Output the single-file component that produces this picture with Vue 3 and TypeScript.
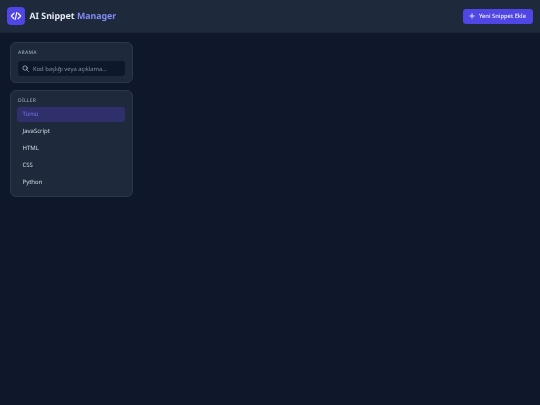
<script setup lang="ts">
const languages: string[] = ['Tümü', 'JavaScript', 'HTML', 'CSS', 'Python']
</script>

<template>
  <div class="page">
    <header class="header">
      <div class="brand">
        <span class="logo">
          <svg width="12" height="12" viewBox="0 0 24 24" fill="none" stroke="#fff" stroke-width="2.2" stroke-linecap="round" stroke-linejoin="round">
            <path d="M8 6.5L2.5 12 8 17.5" />
            <path d="M16 6.5l5.5 5.5-5.5 5.5" />
            <path d="M13.5 5l-3 14" />
          </svg>
        </span>
        <span class="title">AI Snippet <span class="accent">Manager</span></span>
      </div>
      <button class="add">
        <svg width="6" height="6" viewBox="0 0 24 24" fill="none" stroke="#fff" stroke-width="3.2" stroke-linecap="round">
          <path d="M12 3v18M3 12h18" />
        </svg>
        Yeni Snippet Ekle
      </button>
    </header>
    <aside class="sidebar">
      <section class="card">
        <div class="label">ARAMA</div>
        <div class="search">
          <svg width="7" height="7" viewBox="0 0 24 24" fill="none" stroke="#cbd5e1" stroke-width="2.2" stroke-linecap="round">
            <circle cx="10.5" cy="10.5" r="7.5" />
            <path d="M16 16l6 6" />
          </svg>
          <span>Kod başlığı veya açıklama...</span>
        </div>
      </section>
      <section class="card">
        <div class="label langs-label">DİLLER</div>
        <ul class="langs">
          <li v-for="(lang, i) in languages" :key="lang" class="lang" :class="{ active: i === 0 }">{{ lang }}</li>
        </ul>
      </section>
    </aside>
  </div>
</template>

<style>
html, body { margin: 0; background: #0f172a; }
</style>

<style scoped>
.page {
  width: 540px;
  height: 405px;
  background: #0f172a;
  font-family: "Noto Sans", sans-serif;
  text-rendering: geometricPrecision;
  overflow: hidden;
  filter: blur(0.25px);
}
.header {
  height: 32px;
  display: flex;
  align-items: center;
  justify-content: space-between;
  padding: 0 7px;
  background: #1e293b;
  border-bottom: 1px solid #1b2536;
}
.brand { display: flex; align-items: center; gap: 5px; }
.logo {
  width: 17.5px;
  height: 18px;
  border-radius: 4px;
  background: #4f46e5;
  display: flex;
  align-items: center;
  justify-content: center;
}
.title { font-size: 8.8px; font-weight: 700; color: #e2e8f0; }
.accent { color: #818cf8; }
.add {
  height: 15px;
  padding: 0 7px 0 6px;
  border: 0;
  border-radius: 3px;
  background: #4f46e5;
  color: #f1f5f9;
  font: 500 5.8px "Noto Sans", sans-serif;
  text-rendering: geometricPrecision;
  display: flex;
  align-items: center;
  gap: 4px;
}
.sidebar {
  width: 123px;
  margin: 9px 0 0 10px;
  display: flex;
  flex-direction: column;
  gap: 7px;
}
.card {
  background: #1e293b;
  border: 1px solid #2b384b;
  border-radius: 6px;
  padding: 7px 7px 6px 6px;
  box-sizing: border-box;
}
.label {
  font-size: 5px;
  font-weight: 500;
  line-height: 7px;
  letter-spacing: 0.25px;
  color: #94a3b8;
  margin-bottom: 4px;
  padding-left: 1px;
}
.langs-label { margin-bottom: 2px; }
.search {
  height: 15px;
  margin-left: 1px;
  border-radius: 3px;
  background: #0f172a;
  display: flex;
  align-items: center;
  gap: 4px;
  padding-left: 4px;
  font-size: 5.8px;
  color: #8593a8;
}
.langs { list-style: none; margin: 0; padding: 0; display: flex; flex-direction: column; gap: 2px; }
.lang {
  height: 15px;
  line-height: 15.5px;
  padding-left: 5.5px;
  border-radius: 3px;
  font-size: 6px;
  color: #d5dce6;
}
.active { background: #2e2f6b; color: #7478e8; }
</style>
